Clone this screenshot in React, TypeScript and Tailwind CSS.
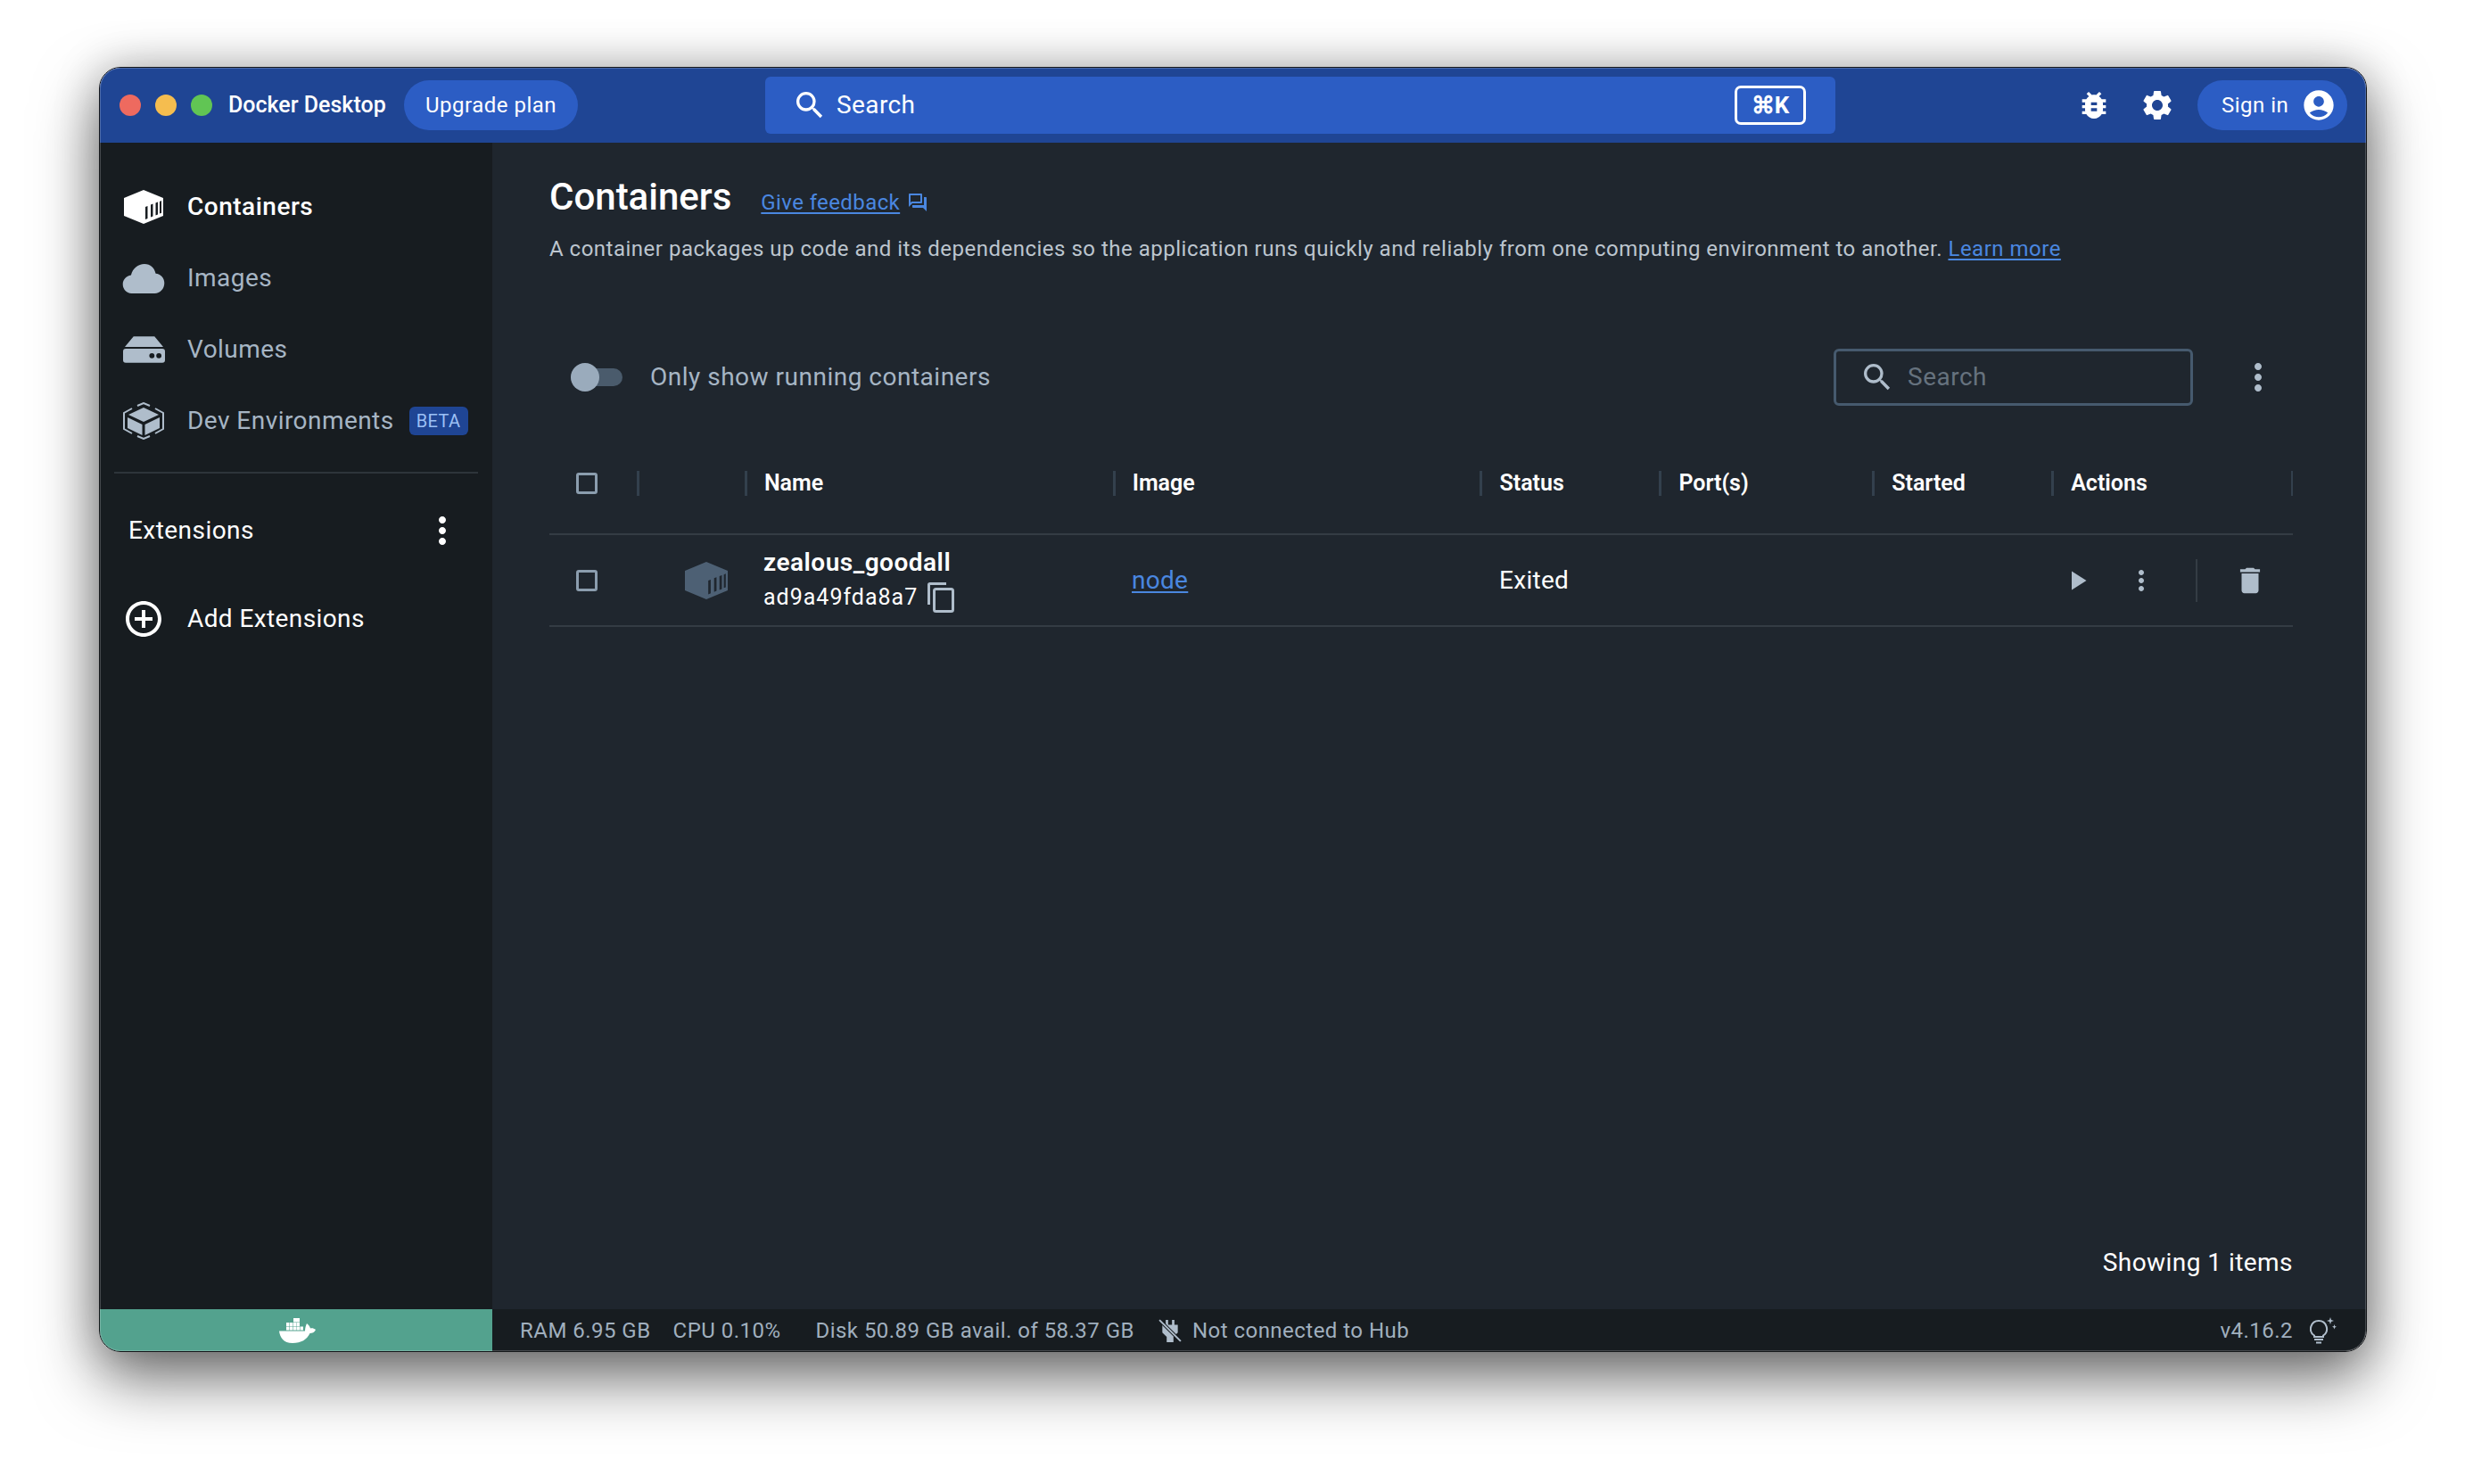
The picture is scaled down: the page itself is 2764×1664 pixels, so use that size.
import {
  MdAccountCircle,
  MdAddCircleOutline,
  MdBugReport,
  MdDelete,
  MdMoreVert,
  MdOutlineForum,
  MdPlayArrow,
  MdSearch,
  MdSettings,
} from "react-icons/md";

const ContainerIcon = ({ className }: { className: string }) => (
  <svg viewBox="0 0 44 38" preserveAspectRatio="none" className={className}>
    <path
      fillRule="evenodd"
      d="M22 0 44 9V29L22 38 0 29V9zM24 19v14l2.500-1V18zM30 16.500v14l2.500-1v-14zM35.500 14.500v14l2.500-1v-14zM40 13v13.500l2-.8V12z"
      fill="currentColor"
    />
  </svg>
);

const CloudIcon = () => (
  <svg viewBox="0 0 48 34" className="h-[33px] w-[48px] text-[#afbdcb]">
    <path
      fill="currentColor"
      d="M25 0c7 0 11.500 4.500 13 11 5.500.5 10 4.500 10 11 0 7-5 12-11 12H10C4 34 0 29 0 23.500 0 18 4 14 9.500 13 11.500 5 17.500 0 25 0z"
    />
  </svg>
);

const VolumeIcon = () => (
  <svg viewBox="0 0 48 30" className="h-[30px] w-[47px] text-[#afbdcb]">
    <path fill="currentColor" d="M12 0h24l10 12H2z" />
    <path
      fill="currentColor"
      fillRule="evenodd"
      d="M3 14h42a3 3 0 0 1 3 3v10a3 3 0 0 1-3 3H3a3 3 0 0 1-3-3V17a3 3 0 0 1 3-3zM33 19a3 3 0 1 0 0 6 3 3 0 0 0 0-6zM41 19a3 3 0 1 0 0 6 3 3 0 0 0 0-6z"
    />
  </svg>
);

const DevEnvIcon = () => (
  <svg viewBox="0 0 48 42" className="h-[42px] w-[48px] text-[#afbdcb]">
    <path fill="currentColor" d="M24 6 41 14 24 22 7 14z" />
    <path fill="currentColor" d="M6 17 22.500 25v12L6 29zM42 17 25.500 25v12L42 29z" />
    <path
      d="M11 7 2 12v18l9 5M37 7l9 5v18l-9 5M17 4l7-3 7 3M17 38l7 3 7-3"
      fill="none"
      stroke="currentColor"
      strokeWidth="2"
    />
  </svg>
);

const DockerWhale = () => (
  <svg viewBox="0 0 41 28" className="h-[28px] w-[41px] text-white">
    <path
      fill="currentColor"
      d="M16 0h7v4.500h-7zM8 5h3.500v4H8zM12 5h3.500v4H12zM16 5h3.300v4H16zM19.700 5H23v4h-3.300zM8 9.500h3.500v4H8zM12 9.500h3.500v4H12zM16 9.500h3.300v4H16zM19.700 9.500H23v4h-3.300zM23.500 9.500H27v4h-3.500zM0 14.500H29C29 11 30 8 31 6C33 7.500 34.500 9.500 35 11.500C37 11 39 11.500 41 13C39.500 16 37 17 34.500 17C31 24 25 28 15 28C5 28 1 22 0 14.500z"
    />
  </svg>
);

const PlugOff = () => (
  <svg viewBox="0 0 24 24" className="h-[26px] w-[26px] text-[#afbdcb]">
    <path fill="currentColor" d="M7.500 1H10v5h4V1h2.500v5H20v8l-4.500 4.500V24h-7v-5.500L4 14V6h3.500z" />
    <path d="M1 1l22 22" stroke="#171c20" strokeWidth="3.500" />
    <path d="M1 1l22 22" stroke="currentColor" strokeWidth="1.800" />
  </svg>
);

const BulbIcon = () => (
  <svg viewBox="0 0 30 30" fill="none" className="h-[30px] w-[30px] text-[#afbdcb]">
    <path
      d="M10 4a9 9 0 0 0-5 16.500V22h10v-1.500A9 9 0 0 0 10 4z"
      stroke="currentColor"
      strokeWidth="2"
    />
    <path d="M5 25h10M7 28.500h6" stroke="currentColor" strokeWidth="2" />
    <path
      fill="currentColor"
      d="M23 0l1 3 3 1-3 1-1 3-1-3-3-1 3-1zM27.500 8l.7 2 1.800.7-1.800.7-.7 2-.7-2-1.800-.7 1.800-.7z"
    />
  </svg>
);

const CopyIcon = () => (
  <svg viewBox="0 0 30 34" fill="none" className="h-[34px] w-[30px] text-[#afbdcb]">
    <path d="M1.500 25V2.500a1 1 0 0 1 1-1H21" stroke="currentColor" strokeWidth="3" />
    <rect x="7.500" y="7.500" width="21" height="25" rx="2" stroke="currentColor" strokeWidth="3" />
  </svg>
);

const Checkbox = () => (
  <span className="block h-6 w-6 rounded-[3px] border-[3px] border-[#8b9dae]" />
);

const NavItem = ({
  icon,
  label,
  active,
  badge,
}: {
  icon: React.ReactNode;
  label: string;
  active?: boolean;
  badge?: boolean;
}) => (
  <div className="flex h-20 items-center pl-[24px]">
    <span className="flex w-[50px] justify-center">{icon}</span>
    <span
      className={
        active
          ? "ml-[24px] text-[28px] font-medium tracking-[0.5px] text-white"
          : "ml-[24px] text-[28px] tracking-[0.45px] text-[#a6b5c4]"
      }
    >
      {label}
    </span>
    {badge && (
      <span className="ml-[17px] flex h-8 w-[66px] items-center justify-center rounded-[6px] bg-[#1f4594] text-[20px] tracking-[0.4px] text-[#9cc0f5]">
        BETA
      </span>
    )}
  </div>
);

const columns = [
  { label: "", width: "w-[121px]" },
  { label: "Name", width: "w-[413px]" },
  { label: "Image", width: "w-[412px]" },
  { label: "Status", width: "w-[201px]" },
  { label: "Port(s)", width: "w-[239px]" },
  { label: "Started", width: "w-[201px]" },
  { label: "Actions", width: "w-[269px]" },
];

export default function App() {
  return (
    <div className="h-[1664px] w-[2764px] overflow-hidden bg-white pl-[111px] pt-[75px] font-['Roboto',sans-serif]">
      <div className="relative flex h-[1441px] w-[2543px] flex-col overflow-hidden rounded-[24px] border border-[#15171a] shadow-[0_30px_70px_rgba(0,0,0,0.55),0_0_50px_rgba(0,0,0,0.22)]">
        <header className="relative flex h-[84px] shrink-0 items-center bg-[#1f4594]">
          <div className="ml-[22px] flex gap-4">
            <span className="h-6 w-6 rounded-full bg-[#ee6a5f]" />
            <span className="h-6 w-6 rounded-full bg-[#f5bd4f]" />
            <span className="h-6 w-6 rounded-full bg-[#61c554]" />
          </div>
          <span className="ml-[18px] w-[177px] whitespace-nowrap text-[25px] font-medium text-white">
            Docker Desktop
          </span>
          <button className="ml-[20px] flex h-14 w-[195px] items-center justify-center rounded-full bg-[#2c5dc4] text-[24px] tracking-[0.5px] text-white">
            Upgrade plan
          </button>
          <div className="ml-[210px] flex h-16 w-[1200px] items-center rounded-[6px] bg-[#2c5dc4] pl-[30px] pr-[33px]">
            <MdSearch className="h-[40px] w-[40px] text-white" />
            <span className="ml-[10px] text-[28px] tracking-[0.4px] text-white">Search</span>
            <span className="ml-auto flex h-[44px] w-[80px] items-center justify-center rounded-[7px] border-[3px] border-white text-[26px] font-bold text-white">
              ⌘K
            </span>
          </div>
          <MdBugReport className="ml-[270px] h-[40px] w-[40px] text-white" />
          <MdSettings className="ml-[31px] h-[40px] w-[40px] text-white" />
          <button className="ml-[25px] flex h-14 w-[168px] items-center rounded-full bg-[#2c5dc4] pl-[27px] text-[24px] tracking-[0.5px] text-white">
            Sign in
            <MdAccountCircle className="ml-[14px] h-[40px] w-[40px] text-white" />
          </button>
        </header>

        <div className="flex min-h-0 flex-1">
          <aside className="flex w-[440px] shrink-0 flex-col bg-[#171c20] pt-[32px]">
            <NavItem
              active
              icon={<ContainerIcon className="h-[38px] w-[44px] text-white" />}
              label="Containers"
            />
            <NavItem icon={<CloudIcon />} label="Images" />
            <NavItem icon={<VolumeIcon />} label="Volumes" />
            <NavItem badge icon={<DevEnvIcon />} label="Dev Environments" />
            <div className="mx-[16px] mt-[17px] h-[2px] bg-[#2e343a]" />
            <div className="flex h-[128px] items-center justify-between pl-[32px] pr-[32px]">
              <span className="text-[28px] tracking-[0.45px] text-white">Extensions</span>
              <MdMoreVert className="h-[48px] w-[48px] text-white" />
            </div>
            <div className="flex h-[70px] items-center pl-[24px]">
              <span className="flex w-[50px] justify-center">
                <MdAddCircleOutline className="h-[48px] w-[48px] text-white" />
              </span>
              <span className="ml-[24px] text-[28px] tracking-[0.4px] text-white">Add Extensions</span>
            </div>
          </aside>

          <main className="flex min-w-0 flex-1 flex-col bg-[#1f262e] pl-[64px] pr-[82px]">
            <div className="mt-[32px] flex h-[56px] items-center">
              <h1 className="text-[42px] font-medium text-white">Containers</h1>
              <a className="ml-[33px] mt-[13px] text-[24px] tracking-[0.4px] text-[#4a87e0] underline underline-offset-[3px]">
                Give feedback
              </a>
              <MdOutlineForum className="ml-[8px] mt-[13px] h-[24px] w-[24px] text-[#4a87e0]" />
            </div>
            <p className="mt-[13px] whitespace-nowrap text-[24px] leading-[37px] tracking-[0.5px] text-[#bcc5ce]">
              A container packages up code and its dependencies so the application runs quickly and
              reliably from one computing environment to another.{" "}
              <a className="text-[#4a87e0] underline underline-offset-[3px]">Learn more</a>
            </p>

            <div className="mt-[93px] flex h-[64px] items-center pl-[24px]">
              <span className="relative block h-5 w-[58px] rounded-full bg-[#4a5b6c]">
                <span className="absolute left-0 top-[-6px] h-8 w-8 rounded-full bg-[#9aabbc]" />
              </span>
              <span className="ml-[31px] text-[28px] tracking-[0.5px] text-[#a6b5c4]">
                Only show running containers
              </span>
              <div className="ml-auto flex h-[64px] w-[403px] items-center rounded-[6px] border-[3px] border-[#465a6e] pl-[26px]">
                <MdSearch className="h-[40px] w-[40px] text-[#afbdcb]" />
                <span className="ml-[14px] text-[28px] tracking-[0.5px] text-[#66727e]">Search</span>
              </div>
              <span className="flex w-[112px] justify-end pr-[15px]">
                <MdMoreVert className="h-[48px] w-[48px] text-[#afbdcb]" />
              </span>
            </div>

            <div className="mt-[73px] flex h-[28px] items-center">
              <span className="flex w-[98px] pl-[30px]">
                <Checkbox />
              </span>
              {columns.map((col) => (
                <div
                  key={col.label || "icon"}
                  className={`${col.width} h-[28px] border-l-[3px] border-[#33404d] pl-[19px] text-[25px] font-semibold leading-[28px] text-white`}
                >
                  {col.label}
                </div>
              ))}
              <span className="h-[28px] w-0 border-l-[2px] border-[#33404d]" />
            </div>

            <div className="mt-[42px] flex h-[105px] items-center border-y-2 border-[#343c44]">
              <span className="flex w-[98px] pl-[30px]">
                <Checkbox />
              </span>
              <span className="flex w-[121px] justify-center pl-[35px]">
                <ContainerIcon className="h-[42px] w-[48px] text-[#4d6074]" />
              </span>
              <div className="flex w-[413px] flex-col pl-[21px]">
                <span className="text-[28px] font-semibold leading-[32px] tracking-[0.5px] text-white">
                  zealous_goodall
                </span>
                <span className="mt-[6px] flex h-[34px] items-center text-[25px] tracking-[1px] text-white">
                  ad9a49fda8a7
                  <span className="ml-[11px] mt-[1px]">
                    <CopyIcon />
                  </span>
                </span>
              </div>
              <span className="w-[412px] pl-[21px] text-[28px] tracking-[0.3px] text-[#4a87e0] underline underline-offset-[3px]">
                node
              </span>
              <span className="w-[641px] pl-[21px] text-[28px] tracking-[0.3px] text-white">Exited</span>
              <div className="flex w-[269px] items-center pl-[10px]">
                <MdPlayArrow className="h-[36px] w-[36px] text-[#afbdcb]" />
                <MdMoreVert className="ml-[36px] h-[36px] w-[36px] text-[#afbdcb]" />
                <span className="ml-[43px] h-[48px] w-[2px] bg-[#343c44]" />
                <MdDelete className="ml-[40px] h-[38px] w-[38px] text-[#afbdcb]" />
              </div>
            </div>

            <div className="mt-auto pb-[35px] text-right text-[28px] leading-[34px] tracking-[0.45px] text-white">
              Showing 1 items
            </div>
          </main>
        </div>

        <footer className="flex h-[47px] shrink-0 bg-[#171c20] text-[24px] tracking-[0.47px] text-[#a0afbe]">
          <div className="flex w-[440px] shrink-0 items-center justify-center bg-[#53a28e] pl-[2px]">
            <DockerWhale />
          </div>
          <div className="flex flex-1 items-center pl-[31px] pr-[33px]">
            <span>RAM 6.95 GB</span>
            <span className="ml-[25px]">CPU 0.10%</span>
            <span className="ml-[39px]">Disk 50.89 GB avail. of 58.37 GB</span>
            <span className="ml-[27px]">
              <PlugOff />
            </span>
            <span className="ml-[12px]">Not connected to Hub</span>
            <span className="ml-auto">v4.16.2</span>
            <span className="ml-[19px]">
              <BulbIcon />
            </span>
          </div>
        </footer>
        <div className="pointer-events-none absolute inset-0 rounded-[23px] border border-white/20" />
      </div>
    </div>
  );
}
